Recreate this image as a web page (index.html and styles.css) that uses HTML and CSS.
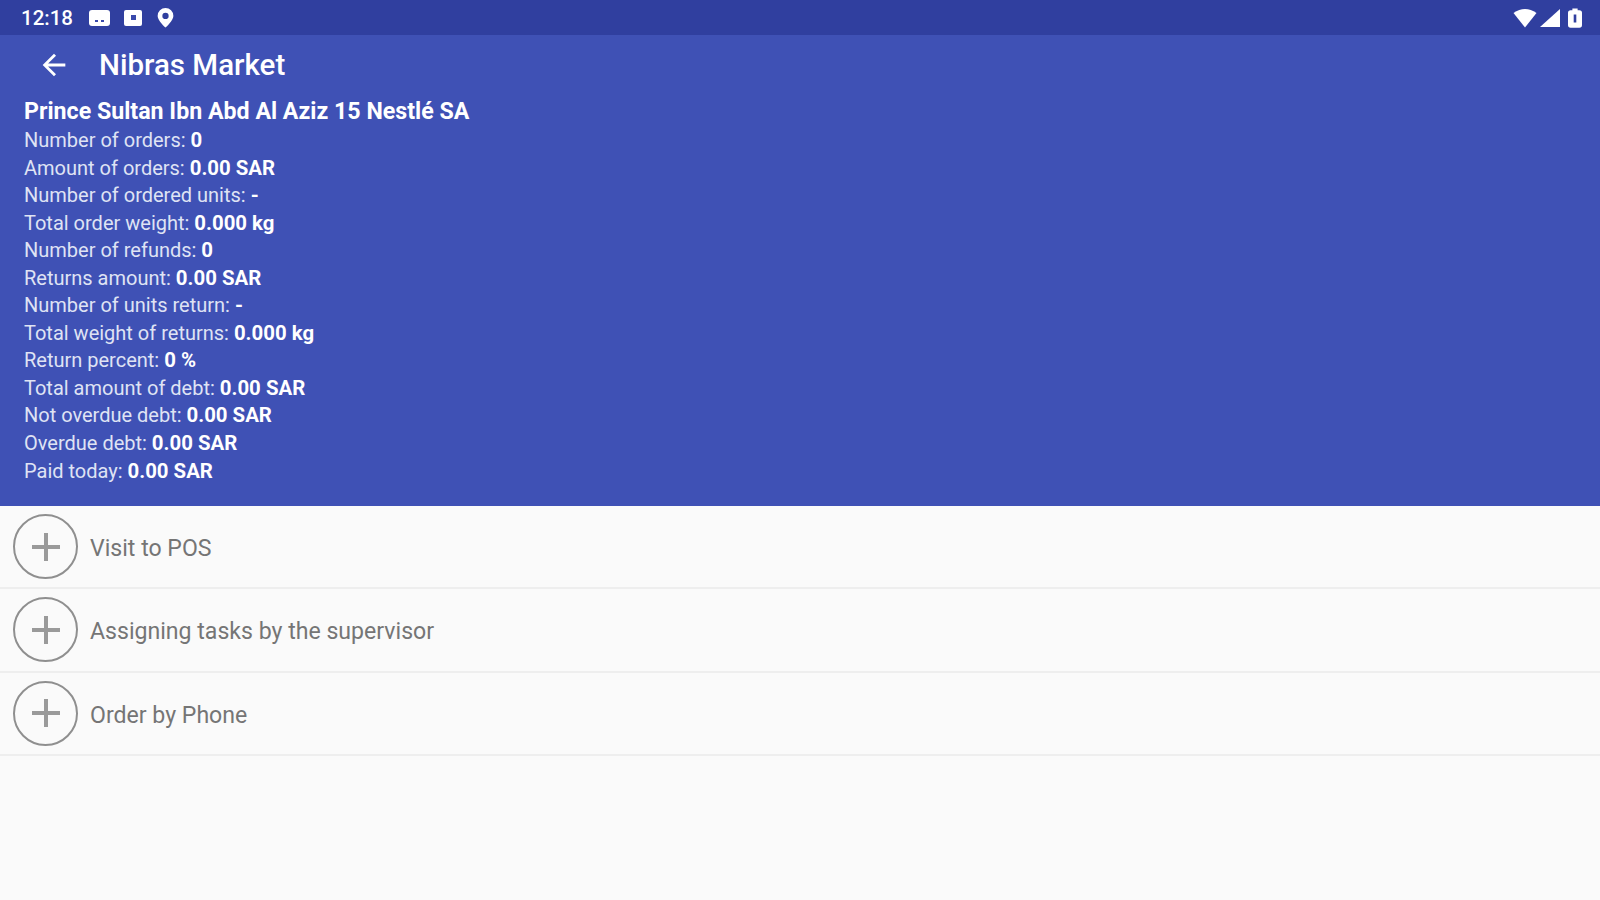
FILE: index.html
```html
<!DOCTYPE html>
<html>
  <head>
    <link rel="stylesheet" href="styles.css">
  </head>
  <body>
    <div class="status-bar">
      <div class="status-left">
        <span class="clock">12:18</span>
        <svg class="status-icon" width="21" height="18" viewBox="0 0 21 18"><path d="M3 1h15a3 3 0 0 1 3 3v10a3 3 0 0 1-3 3H3a3 3 0 0 1-3-3V4a3 3 0 0 1 3-3z" fill="#fff"/><path d="M6 11h3v2H6zM12 11h3v2h-3z" fill="#3949ab"/></svg>
        <svg class="status-icon" width="18" height="18" viewBox="0 0 18 18"><rect x="0" y="1" width="18" height="16" rx="2" fill="#fff"/><rect x="7" y="6" width="5" height="5" fill="#3949ab"/></svg>
        <svg class="status-icon" width="19" height="21" viewBox="0 0 18 20"><path fill-rule="evenodd" d="M9 1a7.500 7.500 0 0 1 7.500 7.500C16.500 13 9 19.500 9 19.500S1.500 13 1.500 8.500A7.500 7.500 0 0 1 9 1zm0 4.500a3 3 0 1 0 0 6 3 3 0 0 0 0-6z" fill="#fff"/></svg>
      </div>
      <div class="status-right">
        <svg class="wifi" width="24" height="20" viewBox="0 0 24 20"><path d="M0.500 5Q12-3 23.500 5L12 19.500z" fill="#fff"/></svg>
        <svg class="signal" width="20" height="18" viewBox="0 0 20 18"><path d="M20 0v18H0z" fill="#fff"/></svg>
        <svg width="14" height="20" viewBox="0 0 16 22"><path fill-rule="evenodd" d="M5 0h6v2h2a3 3 0 0 1 3 3v14a3 3 0 0 1-3 3H3a3 3 0 0 1-3-3V5a3 3 0 0 1 3-3h2zM6.500 7v9h3V7z" fill="#fff"/></svg>
      </div>
    </div>

    <div class="header">
      <div class="toolbar">
        <svg class="back" width="34" height="34" viewBox="0 0 24 24"><path d="M20 11H7.830l5.590-5.590L12 4l-8 8 8 8 1.410-1.410L7.830 13H20z" fill="#fff"/></svg>
        <span class="title">Nibras Market</span>
      </div>
      <div class="info">
        <h2>Prince Sultan Ibn Abd Al Aziz 15 Nestlé SA</h2>
        <p>Number of orders: <b>0</b></p>
        <p>Amount of orders: <b>0.00 SAR</b></p>
        <p>Number of ordered units: <b>-</b></p>
        <p>Total order weight: <b>0.000 kg</b></p>
        <p>Number of refunds: <b>0</b></p>
        <p>Returns amount: <b>0.00 SAR</b></p>
        <p>Number of units return: <b>-</b></p>
        <p>Total weight of returns: <b>0.000 kg</b></p>
        <p>Return percent: <b>0 %</b></p>
        <p>Total amount of debt: <b>0.00 SAR</b></p>
        <p>Not overdue debt: <b>0.00 SAR</b></p>
        <p>Overdue debt: <b>0.00 SAR</b></p>
        <p>Paid today: <b>0.00 SAR</b></p>
      </div>
    </div>

    <ul class="actions">
      <li>
        <span class="plus"><svg width="32" height="32" viewBox="0 0 32 32"><path d="M16 2v28M2 16h28" stroke="#9a9a9a" stroke-width="4" fill="none"/></svg></span>
        <span class="label">Visit to POS</span>
      </li>
      <li>
        <span class="plus"><svg width="32" height="32" viewBox="0 0 32 32"><path d="M16 2v28M2 16h28" stroke="#9a9a9a" stroke-width="4" fill="none"/></svg></span>
        <span class="label">Assigning tasks by the supervisor</span>
      </li>
      <li>
        <span class="plus"><svg width="32" height="32" viewBox="0 0 32 32"><path d="M16 2v28M2 16h28" stroke="#9a9a9a" stroke-width="4" fill="none"/></svg></span>
        <span class="label">Order by Phone</span>
      </li>
    </ul>
  </body>
</html>
```

FILE: styles.css
```css
html, body {
  height: 100%;
}
body {
  margin: 0;
  background-color: #fafafa;
  font-family: Roboto, sans-serif;
  overflow: hidden;
}
.status-bar {
  display: flex;
  justify-content: space-between;
  align-items: center;
  height: 35px;
  padding: 0 18px 0 21px;
  background-color: #303f9f;
  color: #fff;
}
.status-left {
  display: flex;
  align-items: center;
}
.clock {
  font-size: 20.500px;
  font-weight: 500;
  margin-right: 16px;
}
.status-icon {
  margin-right: 14px;
}
.status-right {
  display: flex;
  align-items: center;
}
.wifi {
  margin-right: 3px;
}
.signal {
  margin-right: 8px;
}
.header {
  height: 471px;
  background-color: #3f51b5;
  color: #fff;
}
.toolbar {
  display: flex;
  align-items: center;
  height: 60px;
  padding-left: 37px;
}
.back {
  margin-right: 28px;
}
.title {
  font-size: 29.500px;
  font-weight: 500;
}
.info {
  padding: 1px 24px 0;
}
.info h2 {
  margin: 0 0 1px;
  font-size: 23.200px;
  line-height: 30px;
  font-weight: 700;
}
.info p {
  margin: 0;
  font-size: 20px;
  line-height: 27.550px;
  color: #dfe3f4;
}
.info b {
  color: #fff;
  font-size: 20.400px;
  font-weight: 700;
}
.actions {
  list-style: none;
  margin: 0;
  padding: 0;
}
.actions li {
  display: flex;
  align-items: center;
  height: 81.300px;
  padding-left: 13px;
  border-bottom: 2px solid #eeeeee;
  font-size: 23.100px;
  color: #757575;
}
.label {
  margin-top: 4px;
}
.plus {
  display: flex;
  align-items: center;
  justify-content: center;
  width: 61px;
  height: 61px;
  margin-right: 12px;
  border: 2px solid #8f8f8f;
  border-radius: 50%;
}
```
